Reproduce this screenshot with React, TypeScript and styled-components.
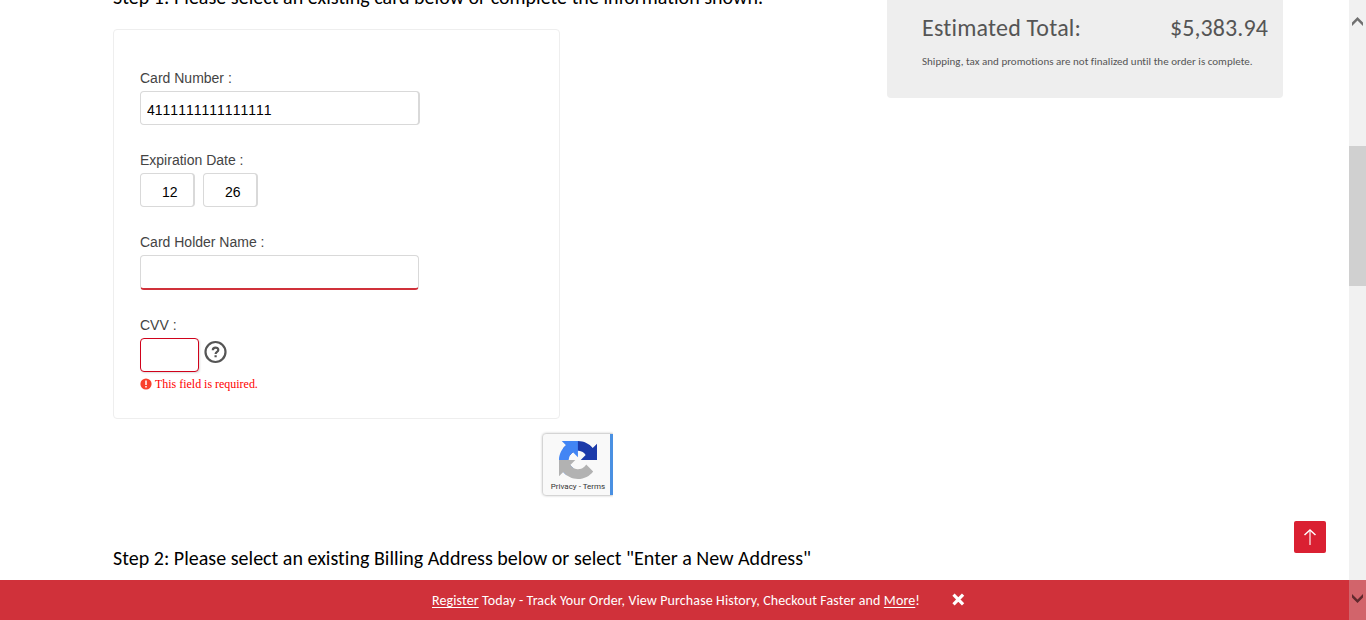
import React from "react";
import styled, { createGlobalStyle } from "styled-components";

const GlobalStyle = createGlobalStyle`
  * { box-sizing: border-box; }
  body { margin: 0; background: #fff; overflow: hidden; }
`;

const humanist = `Calibri, Carlito, Lato, sans-serif`;
const grotesque = `"Liberation Sans", Arial, sans-serif`;

const Window = styled.div`
  display: flex;
  width: 1366px;
  height: 620px;
  overflow: hidden;
`;
const Page = styled.div`
  display: flex;
  flex-direction: column;
  width: 1349px;
`;
const Columns = styled.main`
  display: flex;
  align-items: flex-start;
  height: 580px;
  padding-left: 113px;
`;
const Checkout = styled.section`
  display: flex;
  flex-direction: column;
  width: 774px;
`;
const StepTitle = styled.h2<{ $spacing: number }>`
  margin: 0;
  height: 24px;
  font: 400 20px/24px ${humanist};
  font-variant-ligatures: none;
  letter-spacing: ${(p) => p.$spacing}px;
  color: #000;
  white-space: nowrap;
`;
const FirstTitle = styled(StepTitle)`
  margin-top: -15px;
`;
const CardPanel = styled.form`
  display: flex;
  flex-direction: column;
  width: 447px;
  height: 390px;
  margin-top: 20px;
  padding: 40px 26px 0;
  border: 1px solid #eee;
  border-radius: 4px;
`;
const Field = styled.div<{ $gap?: number }>`
  display: flex;
  flex-direction: column;
  margin-bottom: ${(p) => p.$gap ?? 27}px;
`;
const Label = styled.label`
  height: 16px;
  margin-bottom: 5px;
  font: 14px/16px ${grotesque};
  color: #444;
`;
const Inputs = styled.div`
  display: flex;
  gap: 8px;
`;
const TextBox = styled.input<{ $width: number; $inset?: number; $state?: "active" | "error" }>`
  width: ${(p) => p.$width}px;
  height: ${(p) => (p.$state === "active" ? 35 : 34)}px;
  padding: 4px 0 0 ${(p) => p.$inset ?? 6}px;
  border: 1px solid ${(p) => (p.$state === "error" ? "#d0021b" : "#d9d9d9")};
  border-right-width: ${(p) => (p.$state ? 1 : 2)}px;
  border-bottom: ${(p) => (p.$state === "active" ? "2px solid #d0313a" : "")};
  border-radius: 4px;
  outline: none;
  background: #fff;
  box-shadow: ${(p) => (p.$state === "error" ? "1px 1px 2px #ddd" : "none")};
  font: 14px/16px ${grotesque};
  font-kerning: none;
  color: #000;
`;
const HelpIcon = styled.svg`
  display: block;
  width: 24px;
  height: 24px;
  margin: 2px 0 0 -3px;
`;
const ErrorLine = styled.div`
  display: flex;
  align-items: center;
  gap: 3px;
  height: 16px;
  margin-top: 4px;
  font: 12px/16px "Liberation Serif", "Times New Roman", serif;
  letter-spacing: -0.02px;
  color: #f00;
`;
const Captcha = styled.aside`
  display: flex;
  flex-direction: column;
  align-items: center;
  width: 70px;
  height: 61px;
  margin: 15px 0 51px 430px;
  padding-top: 7px;
  border-right: 3px solid #4a90e2;
  border-radius: 3px 0 0 3px;
  background: #f9f9f9;
  box-shadow: 0 0 3px #888;
  clip-path: inset(-5px 0 -5px -5px);
  font: 8px/10px Roboto, sans-serif;
  color: #333;

  > svg {
    margin-left: 3px;
  }
`;
const CaptchaLinks = styled.span`
  margin-top: 3px;
  padding-left: 3px;
  white-space: nowrap;
`;
const Summary = styled.aside`
  width: 396px;
  height: 98px;
  padding: 13px 15px 0 35px;
  border-radius: 0 0 4px 4px;
  background: #eee;
  color: #555;
`;
const TotalRow = styled.div`
  display: flex;
  justify-content: space-between;
  font: 24px/30px ${humanist};
`;
const Tracked = styled.span<{ $spacing: number }>`
  letter-spacing: ${(p) => p.$spacing}px;
`;
const Note = styled.p`
  margin: 12px 0 0;
  font: 11px/14px ${humanist};
  letter-spacing: 0.02px;
  white-space: nowrap;
`;
const Banner = styled.footer`
  display: flex;
  align-items: center;
  height: 40px;
  padding-left: 432px;
  background: #d0313a;
  font: 14px/18px ${humanist};
  color: #fff;
`;
const Message = styled.span`
  width: 520px;
  padding-top: 2px;
  letter-spacing: 0.11px;
  white-space: nowrap;
`;
const BannerLink = styled.a`
  text-decoration: underline 1px;
  text-underline-offset: 2px;
  text-decoration-skip-ink: none;
`;
const TopButton = styled.button`
  position: absolute;
  left: 1294px;
  top: 521px;
  display: flex;
  align-items: center;
  justify-content: center;
  width: 32px;
  height: 32px;
  padding: 0;
  border: 0;
  border-radius: 2px;
  background: #da2032;
`;
const Scrollbar = styled.div`
  display: flex;
  flex-direction: column;
  justify-content: space-between;
  width: 17px;
  background: #f1f1f1;
`;
const ScrollUp = styled.div`
  height: 146px;
  padding: 16px 0 0 3px;
`;
const Thumb = styled.div`
  height: 140px;
  margin-bottom: auto;
  background: #d0d0d0;
`;
const ScrollDown = styled.div`
  height: 40px;
  padding: 13px 0 0 3px;
  background: #d2646b;
`;
const Glyph = styled.svg`
  display: block;
`;

const Chevron = ({ down }: { down?: boolean }) => (
  <Glyph width="11" height="10" viewBox="0 0 11 10">
    <path
      d={down ? "M0 1 5.5 6.5 11 1V4.5L5.5 10 0 4.5Z" : "M0 6.5 5.5 1 11 6.5V10L5.5 4.5 0 10Z"}
      fill={down ? "#60292d" : "#707070"}
    />
  </Glyph>
);

const CaptchaLogo = () => (
  <svg width="38" height="38" viewBox="0 0 64 64">
    <path fill="#1c3aa9" d="M64 31.96c0-.46-.01-.92-.03-1.37V4.63l-7.18 7.18C50.92 4.62 41.98.02 31.97.02c-10.42 0-19.67 4.97-25.5 12.67l11.76 11.89a15.6 15.6 0 0 1 4.77-5.35c2.06-1.6 4.97-2.92 8.97-2.92.48 0 .86.06 1.13.16 4.96.4 9.26 3.13 11.79 7.1l-8.33 8.33L64 31.96" />
    <path fill="#4285f4" d="M31.86 0c-.46 0-.91.01-1.37.03H4.63l7.18 7.18C4.62 13.08.02 22.02.02 32.03c0 10.42 4.97 19.67 12.67 25.5l11.89-11.76a15.6 15.6 0 0 1-5.35-4.77c-1.6-2.06-2.92-4.97-2.92-8.97 0-.48.06-.86.16-1.13.4-4.96 3.13-9.26 7.1-11.79l8.33 8.33L31.86 0" />
    <path fill="#b2b2b2" d="M0 32.04c0 .46.01.92.03 1.37v25.96l7.18-7.18C13.08 59.38 22.02 63.98 32.03 63.98c10.42 0 19.67-4.97 25.5-12.67L45.77 39.42a15.6 15.6 0 0 1-4.77 5.35c-2.06 1.6-4.97 2.92-8.97 2.92-.48 0-.86-.06-1.13-.16-4.96-.4-9.26-3.13-11.79-7.1l8.33-8.33L0 32.04" />
  </svg>
);

export default function App() {
  return (
    <>
      <GlobalStyle />
      <Window>
        <Page>
          <Columns>
            <Checkout>
              <FirstTitle $spacing={0.03}>
                Step 1: Please select an existing card below or complete the information shown.
              </FirstTitle>
              <CardPanel>
                <Field>
                  <Label>Card Number :</Label>
                  <TextBox $width={280} defaultValue="4111111111111111" />
                </Field>
                <Field>
                  <Label>Expiration Date :</Label>
                  <Inputs>
                    <TextBox $width={55} $inset={21} defaultValue="12" />
                    <TextBox $width={55} $inset={21} defaultValue="26" />
                  </Inputs>
                </Field>
                <Field>
                  <Label>Card Holder Name :</Label>
                  <TextBox $width={279} $state="active" />
                </Field>
                <Field $gap={0}>
                  <Label>CVV :</Label>
                  <Inputs>
                    <TextBox $width={59} $state="error" />
                    <HelpIcon viewBox="0 0 24 24" fill="none" stroke="#555">
                      <circle cx="11.5" cy="12" r="10" strokeWidth="2.2" />
                      <path d="M8.8 10.2C8.8 6.7 14.4 6.8 14.3 10 14.2 12 11.6 11.8 11.6 14M11.6 15.2v2" strokeWidth="2.2" />
                    </HelpIcon>
                  </Inputs>
                  <ErrorLine>
                    <svg width="12" height="12" viewBox="0 0 12 12">
                      <circle cx="6" cy="6" r="5.6" fill="#f9402b" />
                      <path d="M6 2.5V7M6 8v1.5" stroke="#fff" strokeWidth="1.5" />
                    </svg>
                    This field is required.
                  </ErrorLine>
                </Field>
              </CardPanel>
              <Captcha>
                <CaptchaLogo />
                <CaptchaLinks>Privacy - Terms</CaptchaLinks>
              </Captcha>
              <StepTitle $spacing={0.02}>
                Step 2: Please select an existing Billing Address below or select "Enter a New Address"
              </StepTitle>
            </Checkout>
            <Summary>
              <TotalRow>
                <Tracked $spacing={0.2}>Estimated Total:</Tracked>
                <Tracked $spacing={0.1}>$5,383.94</Tracked>
              </TotalRow>
              <Note>Shipping, tax and promotions are not finalized until the order is complete.</Note>
            </Summary>
          </Columns>
          <Banner>
            <Message>
              <BannerLink>Register</BannerLink> Today - Track Your Order, View Purchase History, Checkout Faster and{" "}
              <BannerLink>More</BannerLink>!
            </Message>
            <svg width="13" height="14" viewBox="0 0 13 14">
              <path d="M1.5 1.7l9.6 9.6M11.1 1.7l-9.6 9.6" stroke="#fff" strokeWidth="3.2" />
            </svg>
          </Banner>
        </Page>
        <Scrollbar>
          <ScrollUp><Chevron /></ScrollUp>
          <Thumb />
          <ScrollDown><Chevron down /></ScrollDown>
        </Scrollbar>
        <TopButton aria-label="Back to top">
          <svg width="14" height="18" viewBox="0 0 14 18" fill="none" stroke="#fff">
            <path d="M1.5 7 7 2l5.5 5" strokeWidth="1.5" />
            <path d="M7 2v15" strokeWidth="1.5" opacity=".75" />
          </svg>
        </TopButton>
      </Window>
    </>
  );
}
